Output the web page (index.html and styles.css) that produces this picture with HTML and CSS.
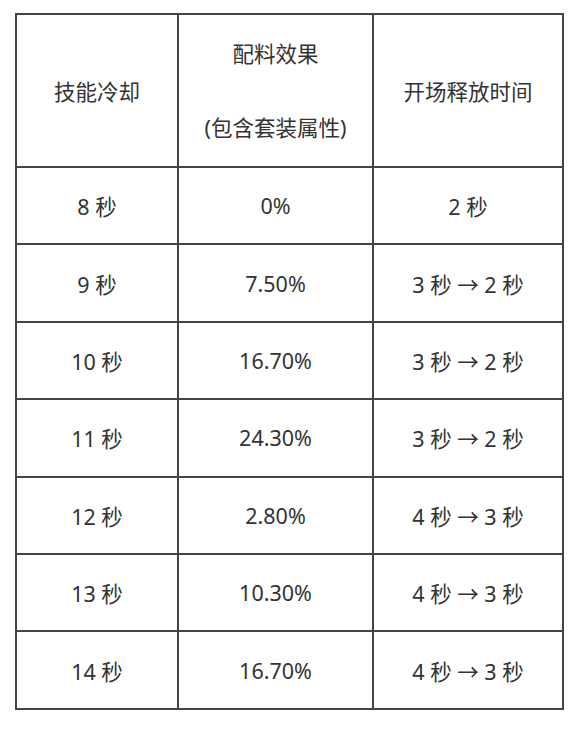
FILE: index.html
```html
<!DOCTYPE html>
<html lang="zh-CN">
<head>
<meta charset="utf-8">
<link rel="stylesheet" href="styles.css">
</head>
<body>
<table class="cd-table">
  <colgroup>
    <col class="c1"><col class="c2"><col class="c3">
  </colgroup>
  <thead>
    <tr class="head">
      <th>技能冷却</th>
      <th><span class="line">配料效果</span><span class="line">(包含套装属性)</span></th>
      <th>开场释放时间</th>
    </tr>
  </thead>
  <tbody>
    <tr><td>8 秒</td><td>0%</td><td>2 秒</td></tr>
    <tr><td>9 秒</td><td>7.50%</td><td>3 秒 → 2 秒</td></tr>
    <tr><td>10 秒</td><td>16.70%</td><td>3 秒 → 2 秒</td></tr>
    <tr><td>11 秒</td><td>24.30%</td><td>3 秒 → 2 秒</td></tr>
    <tr><td>12 秒</td><td>2.80%</td><td>4 秒 → 3 秒</td></tr>
    <tr><td>13 秒</td><td>10.30%</td><td>4 秒 → 3 秒</td></tr>
    <tr><td>14 秒</td><td>16.70%</td><td>4 秒 → 3 秒</td></tr>
  </tbody>
</table>
</body>
</html>
```
FILE: styles.css
```css
html, body {
  margin: 0;
  padding: 0;
  background: #fff;
}
body {
  padding: 13px 0 0 15px;
  font-family: "Noto Sans", "Noto Sans CJK SC", sans-serif;
  color: #333;
}
.cd-table {
  border-collapse: collapse;
  table-layout: fixed;
  width: 549px;
  font-size: 21.5px;
}
.c1 { width: 162px; }
.c2 { width: 195px; }
.c3 { width: 190px; }
.cd-table th,
.cd-table td {
  border: 2px solid #444;
  text-align: center;
  vertical-align: middle;
  font-weight: normal;
  padding: 0;
  height: 75.4px;
}
.cd-table tr.head th {
  height: 151px;
}
.line {
  display: block;
  line-height: 74px;
}
```
